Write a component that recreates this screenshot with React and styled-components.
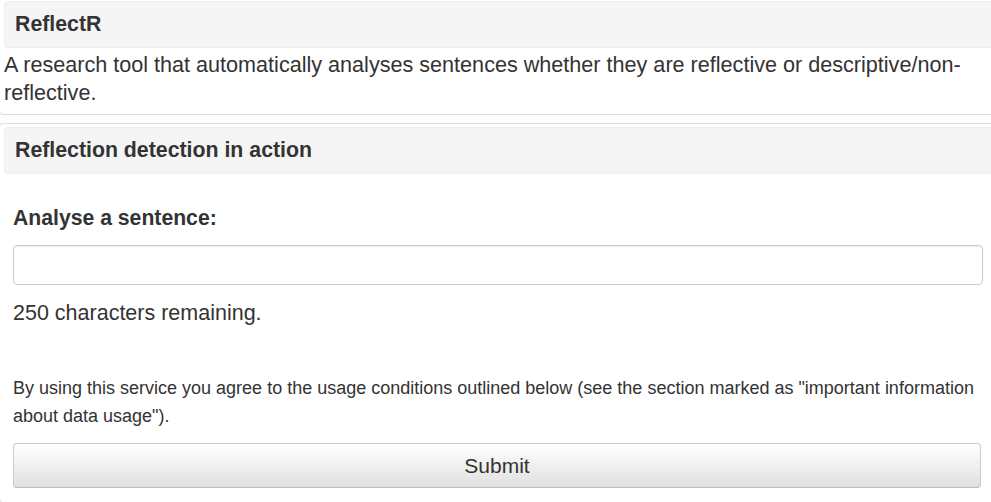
import React, { useState } from "react";
import styled, { createGlobalStyle } from "styled-components";

const MAX_CHARS = 250;

const GlobalStyle = createGlobalStyle`
  html, body {
    margin: 0;
    padding: 0;
    background: #fff;
    overflow: hidden;
  }
  body {
    font-family: "Liberation Sans", Arial, sans-serif;
    color: #333;
  }
`;

const Page = styled.div`
  width: 997px;
  margin-top: -3px;
  display: flex;
  flex-direction: column;
  gap: 8px;
`;

const Panel = styled.section`
  border: 1px solid #ddd;
  border-radius: 4px;
  margin-left: -1px;
  padding: 3px 0 0 4px;
  background: #fff;
`;

const Heading = styled.div`
  box-sizing: border-box;
  height: 47px;
  display: flex;
  align-items: center;
  padding: 0 10px;
  background: #f5f5f5;
  border: 1px solid #eee;
  border-radius: 4px;
  font-size: 21.3px;
  font-weight: 700;
  color: #333;
`;

const Intro = styled.p`
  margin: 0;
  padding: 3px 20px 7px 0;
  font-size: 21.6px;
  line-height: 28px;
  color: #333;
`;

const Body = styled.div`
  padding: 30px 13px 14px 9px;
  display: flex;
  flex-direction: column;
`;

const Label = styled.label`
  font-size: 21.2px;
  font-weight: 700;
  line-height: 28px;
  margin-bottom: 13px;
`;

const TextInput = styled.input`
  box-sizing: border-box;
  width: 970px;
  height: 40px;
  border: 1px solid #ccc;
  border-radius: 4px;
  padding: 6px 12px;
  font: inherit;
  font-size: 21px;
  box-shadow: inset 0 1px 1px rgba(0, 0, 0, 0.075);
  outline: none;
`;

const Remaining = styled.p`
  margin: 14px 0 0;
  font-size: 21.5px;
  line-height: 28px;
`;

const Notice = styled.p`
  margin: 47px 0 0;
  width: 970px;
  font-size: 18px;
  line-height: 28px;
`;

const SubmitButton = styled.button`
  box-sizing: border-box;
  margin-top: 13px;
  width: 968px;
  height: 45px;
  border: 1px solid #ccc;
  border-bottom-color: #bbb;
  border-radius: 4px;
  background: linear-gradient(to bottom, #fff 0%, #e0e0e0 100%);
  font-family: "Liberation Sans", Arial, sans-serif;
  font-size: 21px;
  color: #333;
  cursor: pointer;
`;

export default function App() {
  const [text, setText] = useState("");

  return (
    <>
      <GlobalStyle />
      <Page>
        <Panel>
          <Heading>ReflectR</Heading>
          <Intro>
            A research tool that automatically analyses sentences whether they
            are reflective or descriptive/non-reflective.
          </Intro>
        </Panel>
        <Panel>
          <Heading>Reflection detection in action</Heading>
          <Body>
            <Label htmlFor="sentence">Analyse a sentence:</Label>
            <TextInput
              id="sentence"
              maxLength={MAX_CHARS}
              value={text}
              onChange={(e) => setText(e.target.value)}
            />
            <Remaining>{MAX_CHARS - text.length} characters remaining.</Remaining>
            <Notice>
              By using this service you agree to the usage conditions outlined
              below (see the section marked as "important information about
              data usage").
            </Notice>
            <SubmitButton type="button">Submit</SubmitButton>
          </Body>
        </Panel>
      </Page>
    </>
  );
}
